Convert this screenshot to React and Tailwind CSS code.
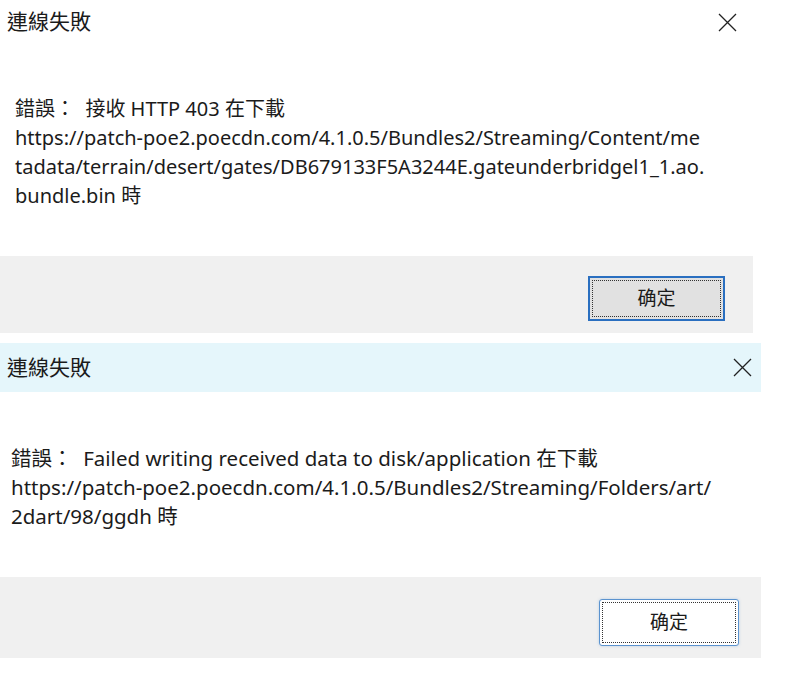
import React from 'react';

const font = { fontFamily: '"Noto Sans", "Noto Sans CJK TC", sans-serif' };

function CloseIcon() {
  return (
    <svg width="19" height="19" viewBox="0 0 19 19" fill="none">
      <path d="M1 1L18 18M18 1L1 18" stroke="#222" strokeWidth="1.3" />
    </svg>
  );
}

function Lines({ lines, size }) {
  return (
    <div className={`${size} leading-[29px] text-[#1b1b1b]`}>
      {lines.map((l, i) => (
        <div key={i} className="whitespace-pre">{l}</div>
      ))}
    </div>
  );
}

export default function App() {
  return (
    <div className="bg-white w-[785px] h-[674px] overflow-hidden" style={font}>
      {/* first dialog */}
      <div className="w-[753px]">
        <div className="h-[256px] flex flex-col">
          <div className="h-[44px] flex items-center justify-between pl-[7px] pr-[16px]">
            <span className="text-[21px] text-[#1b1b1b]">連線失敗</span>
            <CloseIcon />
          </div>
          <div className="pl-[15px] pt-[50px]">
            <Lines
              size="text-[20px]"
              lines={[
                '錯誤：  接收 HTTP 403 在下載',
                'https://patch-poe2.poecdn.com/4.1.0.5/Bundles2/Streaming/Content/me',
                'tadata/terrain/desert/gates/DB679133F5A3244E.gateunderbridgel1_1.ao.',
                'bundle.bin 時',
              ]}
            />
          </div>
        </div>
        <div className="h-[77px] bg-[#f0f0f0] flex justify-end pt-[20px] pr-[28px]">
          <button className="w-[137px] h-[45px] bg-[#e1e1e1] border-2 border-[#2a6fc0] p-[2px]">
            <div className="w-full h-full border border-dotted border-[#333] flex items-center justify-center text-[19px] text-[#1b1b1b]">
              确定
            </div>
          </button>
        </div>
      </div>

      <div className="h-[10px]" />

      {/* second dialog */}
      <div className="w-[761px]">
        <div className="h-[49px] bg-[#e5f6fb] flex items-center justify-between pl-[7px] pr-[9px]">
          <span className="text-[21px] text-[#1b1b1b]">連線失敗</span>
          <CloseIcon />
        </div>
        <div className="h-[185px] pl-[11px] pt-[52px]">
          <Lines
            size="text-[20.5px]"
            lines={[
              '錯誤：  Failed writing received data to disk/application 在下載',
              'https://patch-poe2.poecdn.com/4.1.0.5/Bundles2/Streaming/Folders/art/',
              '2dart/98/ggdh 時',
            ]}
          />
        </div>
        <div className="h-[81px] bg-[#f0f0f0] flex justify-end pt-[22px] pr-[22px]">
          <button className="w-[140px] h-[47px] bg-white border border-[#5b93cf] rounded-[3px] p-[2px] shadow-[0_0_3px_rgba(90,150,210,0.35)]">
            <div className="w-full h-full border border-dotted border-[#333] flex items-center justify-center text-[19px] text-[#1b1b1b]">
              确定
            </div>
          </button>
        </div>
      </div>
    </div>
  );
}
